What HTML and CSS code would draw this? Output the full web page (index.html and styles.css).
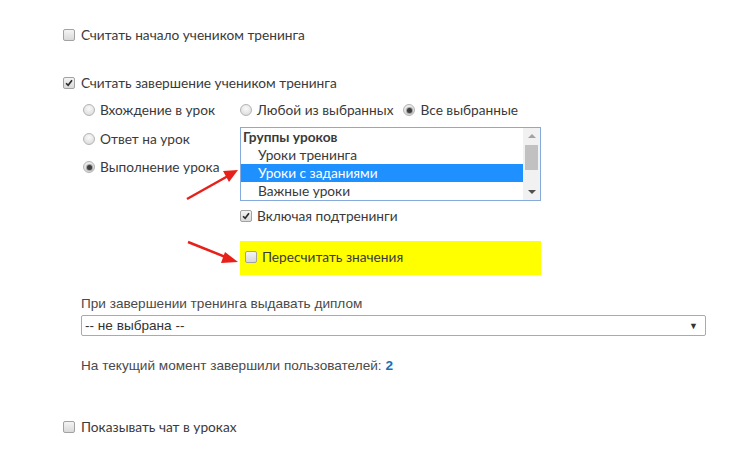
FILE: index.html
```html
<!DOCTYPE html>
<html lang="ru">
<head>
    <meta charset="UTF-8">
    <meta name="viewport" content="width=device-width, initial-scale=1.0">
    <title>Настройки тренинга</title>
    <link rel="stylesheet" href="styles.css">
</head>
<body>
    <div class="page">
        <label class="check start-row"><span class="box"></span>Считать начало учеником тренинга</label>

        <label class="check finish-row">
            <span class="box"><svg viewBox="0 0 12 12"><path d="M2.5 6.3 L5 8.8 L9.6 2.8" /></svg></span>
            Считать завершение учеником тренинга
        </label>

        <div class="modes">
            <div class="mode-list">
                <label class="radio"><span class="dot"></span>Вхождение в урок</label>
                <label class="radio"><span class="dot"></span>Ответ на урок</label>
                <label class="radio"><span class="dot on"></span>Выполнение урока</label>
            </div>

            <div class="lesson-opts">
                <div class="match">
                    <label class="radio"><span class="dot"></span>Любой из выбранных</label>
                    <label class="radio"><span class="dot on"></span>Все выбранные</label>
                </div>

                <div class="listbox">
                    <div class="items">
                        <div class="group">Группы уроков</div>
                        <div class="item">Уроки тренинга</div>
                        <div class="item selected">Уроки с заданиями</div>
                        <div class="item">Важные уроки</div>
                    </div>
                    <div class="scrollbar">
                        <span class="arr up"></span>
                        <span class="thumb"></span>
                        <span class="arr down"></span>
                    </div>
                </div>

                <label class="check sub-row">
                    <span class="box"><svg viewBox="0 0 12 12"><path d="M2.5 6.3 L5 8.8 L9.6 2.8" /></svg></span>
                    Включая подтренинги
                </label>

                <div class="recalc">
                    <label class="check"><span class="box"></span>Пересчитать значения</label>
                </div>
            </div>
        </div>

        <div class="diploma">
            <div class="diploma-label">При завершении тренинга выдавать диплом</div>
            <div class="select"><span>-- не выбрана --</span><span class="caret">&#9660;</span></div>
            <div class="finished">На текущий момент завершили пользователей: <b>2</b></div>
        </div>

        <label class="check chat-row"><span class="box"></span>Показывать чат в уроках</label>

        <!-- стрелки поверх скриншота -->
        <svg class="arrows" width="746" height="453" viewBox="0 0 746 453">
            <line x1="187" y1="199" x2="228" y2="176" />
            <polygon points="238,170 223,171 229,182" />
            <line x1="188" y1="242" x2="228" y2="258" />
            <polygon points="238,262 225,252 221,263" />
        </svg>
    </div>
</body>
</html>
```
FILE: styles.css
```css
body {
    margin: 0;
    background-color: #fff;
    color: #3a3a3a;
    font-family: Lato, "Open Sans", sans-serif;
    font-size: 13.7px;
}
.page {
    position: relative;
    padding: 26px 0 0 63px;
    height: 427px;
}
.check, .radio {
    display: flex;
    align-items: center;
    gap: 6px;
    height: 18px;
    line-height: 18px;
    white-space: nowrap;
}
.box {
    width: 12px;
    height: 12px;
    box-sizing: border-box;
    border: 1px solid #a2a2a2;
    border-radius: 2px;
    background: linear-gradient(#f4f4f4, #d9d9d9);
    flex: none;
    display: flex;
}
.box svg {
    width: 10px;
    height: 10px;
}
.box path {
    fill: none;
    stroke: #2b2b2b;
    stroke-width: 2;
}
.dot {
    width: 12px;
    height: 12px;
    box-sizing: border-box;
    border: 1px solid #b4b4b4;
    border-radius: 50%;
    background: radial-gradient(circle at 50% 35%, #fafafa, #d6d6d6);
    flex: none;
    display: flex;
    align-items: center;
    justify-content: center;
}
.dot.on::after {
    content: "";
    width: 5px;
    height: 5px;
    border-radius: 50%;
    background-color: #3e3e3e;
    box-shadow: 0 0 1px 1px #9a9a9a;
}
.finish-row {
    margin-top: 30px;
}
.modes {
    display: flex;
    padding-left: 20px;
    margin-top: 9px;
}
.mode-list {
    width: 157px;
    display: flex;
    flex-direction: column;
    gap: 10.5px;
}
.mode-list .radio {
    gap: 5px;
}
.lesson-opts {
    display: flex;
    flex-direction: column;
    width: 301px;
}
.match {
    display: flex;
    gap: 10px;
}
.match .radio {
    gap: 5px;
}
.listbox {
    margin-top: 8px;
    height: 74px;
    box-sizing: border-box;
    border: 1px solid #86aadb;
    display: flex;
    overflow: hidden;
}
.items {
    flex: 1;
}
.group, .item {
    height: 18px;
    line-height: 18px;
}
.group {
    font-weight: bold;
    padding-left: 2px;
}
.item {
    padding-left: 17px;
}
.item.selected {
    background-color: #1e90ff;
    color: #fff;
}
.scrollbar {
    width: 17px;
    background-color: #f1f1f1;
    position: relative;
}
.thumb {
    position: absolute;
    left: 2px;
    top: 17px;
    width: 13px;
    height: 25px;
    background-color: #c1c1c1;
}
.arr {
    position: absolute;
    left: 5px;
    width: 0;
    height: 0;
    border-left: 4px solid transparent;
    border-right: 4px solid transparent;
}
.arr.up {
    top: 6px;
    border-bottom: 4px solid #a3a3a3;
}
.arr.down {
    bottom: 6px;
    border-top: 4px solid #505050;
}
.sub-row {
    margin-top: 5.5px;
    gap: 5px;
}
.recalc {
    margin-top: 16.5px;
    height: 34px;
    box-sizing: border-box;
    background-color: #ffff00;
    padding: 7px 0 0 5px;
}
.recalc .check {
    gap: 5px;
}
.diploma {
    padding-left: 18px;
    margin-top: 20px;
    font-family: "Liberation Sans", Arial, sans-serif;
    font-size: 13.6px;
    color: #4a4a4a;
}
.diploma-label {
    height: 18px;
    line-height: 18px;
}
.select {
    margin-top: 2px;
    width: 625px;
    height: 21px;
    box-sizing: border-box;
    border: 1px solid #aaa;
    border-radius: 2px;
    display: flex;
    justify-content: space-between;
    align-items: center;
    padding: 0 7px 0 3px;
    color: #333;
}
.caret {
    font-size: 9px;
}
.finished {
    margin-top: 21px;
    height: 18px;
    line-height: 18px;
}
.finished b {
    color: #1b6fb3;
}
.chat-row {
    margin-top: 43px;
}
.arrows {
    position: absolute;
    left: 0;
    top: 0;
    pointer-events: none;
}
.arrows line {
    stroke: #e8201a;
    stroke-width: 2.5;
}
.arrows polygon {
    fill: #e8201a;
}
```
